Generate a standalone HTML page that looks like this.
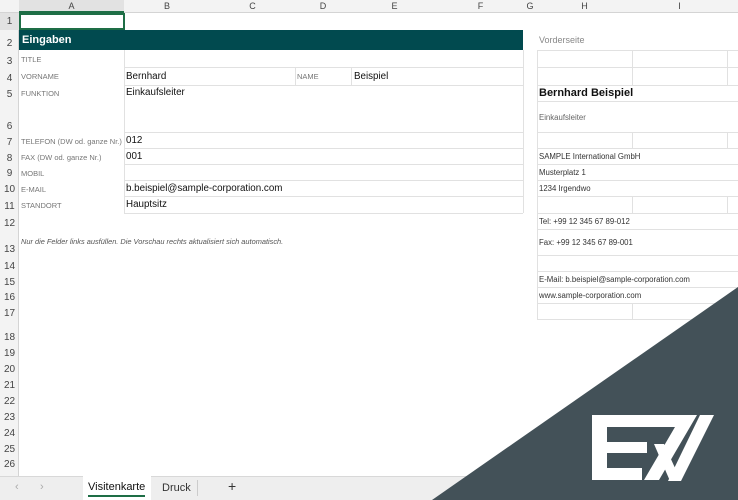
<!DOCTYPE html>
<html><head><meta charset="utf-8"><style>
*{margin:0;padding:0;box-sizing:border-box}
body{width:738px;height:500px;overflow:hidden;background:#fff;font-family:"Liberation Sans","DejaVu Sans",sans-serif;position:relative}
.a{position:absolute}
.h{position:absolute;height:1px;background:#e1e1e1}
.v{position:absolute;width:1px;background:#e1e1e1}
.rn{position:absolute;left:0;width:19px;text-align:center;font-size:10px;color:#444}
.ch{position:absolute;top:0;height:13px;font-size:9px;color:#444;text-align:center;line-height:13px}
.lb{position:absolute;left:21px;font-size:7.5px;color:#777}
.tx{position:absolute;font-size:9.8px;color:#111}
.pv{position:absolute;left:539px;font-size:7.8px;color:#333}
</style></head><body>
<div class="a" style="left:0;top:0;width:738px;height:13px;background:#f3f3f3;border-bottom:1px solid #d4d4d4"></div>
<div class="a" style="left:19px;top:0;width:105px;height:13px;background:#e2e2e2;border-bottom:2px solid #1e6e46"></div>
<div class="a" style="left:0;top:13px;width:19px;height:463px;background:#f3f3f3;border-right:1px solid #d4d4d4"></div>
<div class="a" style="left:0;top:13px;width:19px;height:17px;background:#e2e2e2"></div>
<div class="ch" style="left:19px;width:105px">A</div>
<div class="ch" style="left:124px;width:86px">B</div>
<div class="ch" style="left:210px;width:85px">C</div>
<div class="ch" style="left:295px;width:56px">D</div>
<div class="ch" style="left:351px;width:87px">E</div>
<div class="ch" style="left:438px;width:85px">F</div>
<div class="ch" style="left:523px;width:14px">G</div>
<div class="ch" style="left:537px;width:95px">H</div>
<div class="ch" style="left:632px;width:95px">I</div>
<div class="rn" style="top:16px">1</div>
<div class="rn" style="top:38px">2</div>
<div class="rn" style="top:56px">3</div>
<div class="rn" style="top:73px">4</div>
<div class="rn" style="top:89px">5</div>
<div class="rn" style="top:121px">6</div>
<div class="rn" style="top:137px">7</div>
<div class="rn" style="top:153px">8</div>
<div class="rn" style="top:168px">9</div>
<div class="rn" style="top:184px">10</div>
<div class="rn" style="top:201px">11</div>
<div class="rn" style="top:218px">12</div>
<div class="rn" style="top:244px">13</div>
<div class="rn" style="top:261px">14</div>
<div class="rn" style="top:277px">15</div>
<div class="rn" style="top:292px">16</div>
<div class="rn" style="top:308px">17</div>
<div class="rn" style="top:332px">18</div>
<div class="rn" style="top:348px">19</div>
<div class="rn" style="top:364px">20</div>
<div class="rn" style="top:380px">21</div>
<div class="rn" style="top:396px">22</div>
<div class="rn" style="top:412px">23</div>
<div class="rn" style="top:428px">24</div>
<div class="rn" style="top:444px">25</div>
<div class="rn" style="top:459px">26</div>
<div class="a" style="left:19px;top:13px;width:106px;height:17px;border:2px solid #1e6e46"></div>
<div class="a" style="left:19px;top:30px;width:504px;height:20px;background:#014a4f;color:#fff;font-weight:bold;font-size:11px;line-height:20px;padding-left:3px">Eingaben</div>
<div class="h" style="left:124px;top:67px;width:399px"></div>
<div class="h" style="left:124px;top:85px;width:399px"></div>
<div class="h" style="left:124px;top:132px;width:399px"></div>
<div class="h" style="left:124px;top:148px;width:399px"></div>
<div class="h" style="left:124px;top:164px;width:399px"></div>
<div class="h" style="left:124px;top:180px;width:399px"></div>
<div class="h" style="left:124px;top:196px;width:399px"></div>
<div class="h" style="left:124px;top:213px;width:399px"></div>
<div class="v" style="left:124px;top:50px;height:163px"></div>
<div class="v" style="left:523px;top:50px;height:163px"></div>
<div class="v" style="left:295px;top:67px;height:18px"></div>
<div class="v" style="left:351px;top:67px;height:18px"></div>
<div class="lb" style="top:55px">TITLE</div>
<div class="lb" style="top:72px">VORNAME</div>
<div class="lb" style="top:89px">FUNKTION</div>
<div class="lb" style="top:137px">TELEFON (DW od. ganze Nr.)</div>
<div class="lb" style="top:153px">FAX (DW od. ganze Nr.)</div>
<div class="lb" style="top:169px">MOBIL</div>
<div class="lb" style="top:185px">E-MAIL</div>
<div class="lb" style="top:201px">STANDORT</div>
<div class="lb" style="left:297px;top:72px">NAME</div>
<div class="tx" style="left:126px;top:71px">Bernhard</div>
<div class="tx" style="left:354px;top:71px">Beispiel</div>
<div class="tx" style="left:126px;top:87px">Einkaufsleiter</div>
<div class="tx" style="left:126px;top:135px">012</div>
<div class="tx" style="left:126px;top:151px">001</div>
<div class="tx" style="left:126px;top:183px">b.beispiel@sample-corporation.com</div>
<div class="tx" style="left:126px;top:199px">Hauptsitz</div>
<div class="a" style="left:21px;top:237px;font-size:7.4px;font-style:italic;color:#555">Nur die Felder links ausfüllen. Die Vorschau rechts aktualisiert sich automatisch.</div>
<div class="a" style="left:539px;top:35px;font-size:9px;color:#888">Vorderseite</div>
<div class="v" style="left:537px;top:50px;height:270px"></div>
<div class="h" style="left:537px;top:50px;width:201px"></div>
<div class="h" style="left:537px;top:67px;width:201px"></div>
<div class="h" style="left:537px;top:85px;width:201px"></div>
<div class="h" style="left:537px;top:101px;width:201px"></div>
<div class="h" style="left:537px;top:132px;width:201px"></div>
<div class="h" style="left:537px;top:148px;width:201px"></div>
<div class="h" style="left:537px;top:164px;width:201px"></div>
<div class="h" style="left:537px;top:180px;width:201px"></div>
<div class="h" style="left:537px;top:196px;width:201px"></div>
<div class="h" style="left:537px;top:213px;width:201px"></div>
<div class="h" style="left:537px;top:229px;width:201px"></div>
<div class="h" style="left:537px;top:255px;width:201px"></div>
<div class="h" style="left:537px;top:271px;width:201px"></div>
<div class="h" style="left:537px;top:287px;width:201px"></div>
<div class="h" style="left:537px;top:303px;width:201px"></div>
<div class="h" style="left:537px;top:319px;width:201px"></div>
<div class="v" style="left:632px;top:50px;height:35px"></div>
<div class="v" style="left:727px;top:50px;height:35px"></div>
<div class="v" style="left:632px;top:132px;height:16px"></div>
<div class="v" style="left:727px;top:132px;height:16px"></div>
<div class="v" style="left:632px;top:196px;height:17px"></div>
<div class="v" style="left:727px;top:196px;height:17px"></div>
<div class="v" style="left:632px;top:303px;height:16px"></div>
<div class="a" style="left:539px;top:87px;font-size:11px;font-weight:bold;color:#111">Bernhard Beispiel</div>
<div class="pv" style="top:113px;color:#666">Einkaufsleiter</div>
<div class="pv" style="top:152px">SAMPLE International GmbH</div>
<div class="pv" style="top:168px">Musterplatz 1</div>
<div class="pv" style="top:184px">1234 Irgendwo</div>
<div class="pv" style="top:217px">Tel: +99 12 345 67 89-012</div>
<div class="pv" style="top:238px">Fax: +99 12 345 67 89-001</div>
<div class="pv" style="top:275px">E-Mail: b.beispiel@sample-corporation.com</div>
<div class="pv" style="top:291px">www.sample-corporation.com</div>
<div class="a" style="left:0;top:476px;width:738px;height:24px;background:#eeeeee;border-top:1px solid #d8d8d8"></div>
<div class="a" style="left:15px;top:481px;font-size:11px;color:#aaa">&lsaquo;</div>
<div class="a" style="left:40px;top:481px;font-size:11px;color:#aaa">&rsaquo;</div>
<div class="a" style="left:83px;top:476px;width:68px;height:24px;background:#fff"></div>
<div class="a" style="left:88px;top:481px;font-size:11px;color:#111">Visitenkarte</div>
<div class="a" style="left:88px;top:495px;width:57px;height:2px;background:#1e6e46"></div>
<div class="a" style="left:162px;top:482px;font-size:11px;color:#333">Druck</div>
<div class="v" style="left:197px;top:480px;height:16px;background:#ccc"></div>
<div class="a" style="left:228px;top:478px;font-size:14px;color:#333">+</div>
<svg class="a" style="left:0;top:0" width="738" height="500" viewBox="0 0 738 500">
<polygon points="432,500 738,287 738,500" fill="#435158"/>
<g fill="#fff">
<polygon points="592,415 683,415 683,427 607,427 607,442 647,442 647,453 607,453 607,468 642,468 642,480 592,480"/>
<polygon points="682,415 697,415 659,480 644,480"/>
<polygon points="700,415 714,415 681,481 668,481"/>
<polygon points="654,444 664,444 681,481 670,481"/>
</g>
</svg>
</body></html>
